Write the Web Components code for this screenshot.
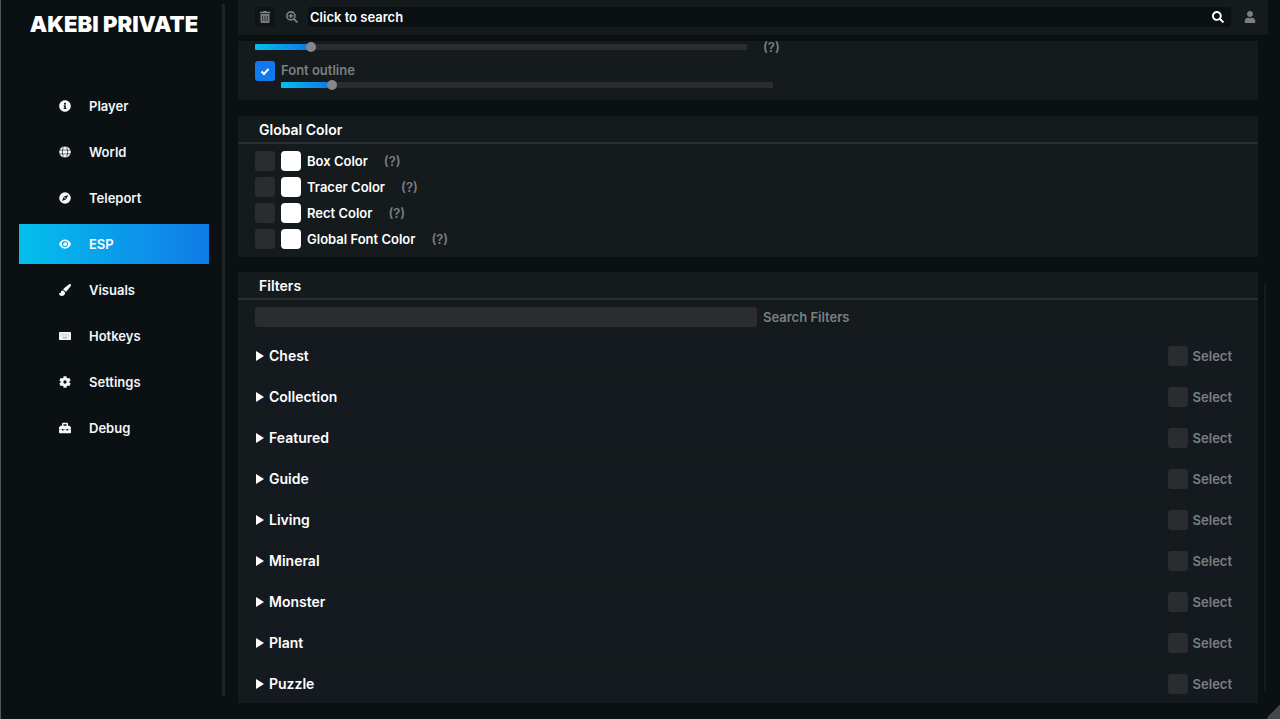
<!DOCTYPE html>
<html lang="en">
<head>
<meta charset="utf-8">
<title>Akebi Private</title>
<style>
  html { background: #0b1013; }
  body {
    margin: 0;
    font-family: Inter, "Liberation Sans", sans-serif;
    font-size: 13px;
    font-weight: 600;
    line-height: 20px;
    color: #fff;
    --panel: #151a1d;
    --field: #2a2c2f;
    --muted: #7c7f81;
    --rule: #2a2d34;
    --accent: linear-gradient(90deg, #04c0ec, #107ae8);
  }
</style>
</head>
<body>
<akebi-app></akebi-app>

<script>
const define = (name, html, setup) => {
  const template = document.createElement('template');
  template.innerHTML = html;
  customElements.define(name, class extends HTMLElement {
    constructor() {
      super();
      this.attachShadow({ mode: 'open' }).append(template.content.cloneNode(true));
    }
    connectedCallback() {
      if (setup) setup(this, this.shadowRoot);
    }
  });
};

const ICONS = {
  info: ['0 0 512 512', '<path d="M256 8C119.043 8 8 119.083 8 256c0 136.997 111.043 248 248 248s248-111.003 248-248C504 119.083 392.957 8 256 8zm0 110c23.196 0 42 18.804 42 42s-18.804 42-42 42-42-18.804-42-42 18.804-42 42-42zm56 254c0 6.627-5.373 12-12 12h-88c-6.627 0-12-5.373-12-12v-24c0-6.627 5.373-12 12-12h12v-64h-12c-6.627 0-12-5.373-12-12v-24c0-6.627 5.373-12 12-12h64c6.627 0 12 5.373 12 12v100h12c6.627 0 12 5.373 12 12v24z"/>'],
  globe: ['0 0 512 512', '<circle cx="256" cy="256" r="248"/><g fill="none" stroke="#0b1013" stroke-width="26"><path d="M8 176h496M8 336h496"/><ellipse cx="256" cy="256" rx="112" ry="262"/></g>'],
  compass: ['0 0 512 512', '<path fill-rule="evenodd" d="M256 8a248 248 0 1 0 0 496 248 248 0 0 0 0-496zm122 143-62 136a58 58 0 0 1-29 29l-136 62c-16 7-24-1-17-17l62-136a58 58 0 0 1 29-29l136-62c16-7 24 1 17 17zM256 222a34 34 0 1 0 0 68 34 34 0 0 0 0-68z"/>'],
  eye: ['0 0 576 512', '<path fill-rule="evenodd" d="M573 241C518 116 411 34 288 34S58 116 3 241a32 32 0 0 0 0 30c55 125 162 207 285 207s230-82 285-207a32 32 0 0 0 0-30zM288 404a148 148 0 1 1 148-148 148 148 0 0 1-148 148zm0-244a95 95 0 0 0-25 4 48 48 0 0 1-67 67A96 96 0 1 0 288 160z"/>'],
  brush: ['0 0 512 512', '<path d="M460 4c-14 0-28 7-40 17L212 180c-18 16-28 36-28 58l90 86c26 2 46-8 62-28L504 84c6-12 8-24 8-37 0-26-18-43-52-43zM170 262c-50 0-80 34-90 82-8 40-18 54-50 50-16-2-32 4-30 18 8 60 70 96 122 96 84 0 142-56 140-142z"/>'],
  keyboard: ['0 0 576 512', '<rect y="64" width="576" height="384" rx="36"/><path fill="none" stroke="#0b1013" stroke-opacity=".3" stroke-width="40" stroke-dasharray="44 28" d="M70 166h440M70 256h440"/><path stroke="#0b1013" stroke-opacity=".5" stroke-width="36" d="M180 346h216"/>'],
  gear: ['0 0 512 512', '<circle cx="256" cy="256" r="130" fill="none" stroke="currentColor" stroke-width="120"/><g fill="none" stroke="currentColor" stroke-width="130"><path d="M256 10v110M256 392v110M44 134l96 55M372 323l96 55M44 378l96-55M372 189l96-55"/></g>'],
  toolbox: ['0 0 512 512', '<path fill-rule="evenodd" d="M502 214l-45-45c-6-6-14-9-22-9h-51V80c0-26-22-48-48-48H176c-26 0-48 22-48 48v80H77c-8 0-16 3-22 9l-45 45c-6 6-10 14-10 22v94h128v-32h64v32h128v-32h64v32h128v-94c0-8-4-16-10-22zM320 160H192V96h128zM384 360h-64v-16H192v16h-64v-16H0v104c0 18 14 32 32 32h448c18 0 32-14 32-32V344H384z"/>'],
  trash: ['0 0 448 512', '<path d="M32 464a48 48 0 0 0 48 48h288a48 48 0 0 0 48-48V128H32zm272-256a16 16 0 0 1 32 0v224a16 16 0 0 1-32 0zm-96 0a16 16 0 0 1 32 0v224a16 16 0 0 1-32 0zm-96 0a16 16 0 0 1 32 0v224a16 16 0 0 1-32 0zM432 32H312l-9.4-18.7A24 24 0 0 0 281.1 0H166.8a23.72 23.72 0 0 0-21.4 13.3L136 32H16A16 16 0 0 0 0 48v32a16 16 0 0 0 16 16h416a16 16 0 0 0 16-16V48a16 16 0 0 0-16-16z"/>'],
  search: ['0 0 512 512', '<path d="M505 442.7L405.3 343c-4.5-4.5-10.6-7-17-7H372c27.6-35.3 44-79.7 44-128C416 93.1 322.9 0 208 0S0 93.1 0 208s93.1 208 208 208c48.3 0 92.7-16.4 128-44v16.3c0 6.4 2.5 12.5 7 17l99.7 99.7c9.4 9.4 24.6 9.4 33.9 0l28.3-28.3c9.4-9.4 9.4-24.6.1-34zM208 336c-70.7 0-128-57.2-128-128 0-70.7 57.2-128 128-128 70.7 0 128 57.2 128 128 0 70.7-57.2 128-128 128z"/>'],
  zoomin: ['0 0 512 512', '<g fill="none" stroke="currentColor"><circle cx="208" cy="208" r="172" stroke-width="72"/><path stroke-width="84" stroke-linecap="round" d="M345 345l118 118"/><path stroke-width="72" d="M208 112v192M112 208h192"/></g>'],
  user: ['0 0 448 512', '<path d="M224 256c70.7 0 128-57.3 128-128S294.7 0 224 0 96 57.3 96 128s57.3 128 128 128zm89.6 32h-16.7c-22.2 10.2-46.9 16-72.9 16s-50.6-5.8-72.9-16h-16.7C60.2 288 0 348.2 0 422.4V464c0 26.5 21.5 48 48 48h352c26.5 0 48-21.5 48-48v-41.6c0-74.2-60.2-134.4-134.4-134.4z"/>'],
  triangle: ['0 0 8 10', '<path d="M0 0l8 5-8 5z"/>']
};

define('app-icon', `
  <style>
    :host { display: block; width: 12px; height: 12px; flex: none; }
    svg { display: block; width: 100%; height: 100%; fill: currentColor; }
  </style>
  <svg aria-hidden="true"></svg>`, (host, root) => {
  const [box, shapes] = ICONS[host.getAttribute('name')];
  const svg = root.querySelector('svg');
  svg.setAttribute('viewBox', box);
  svg.innerHTML = shapes;
});

define('nav-item', `
  <style>
    :host { display: block; }
    a {
      display: flex; align-items: center; gap: 18px;
      height: 40px; padding-left: 40px;
      color: #f4f6f7; text-decoration: none;
    }
    :host([current]) a { background: var(--accent); color: #fff; }
  </style>
  <a href="#"><span><slot></slot></span></a>`, (host, root) => {
  const link = root.querySelector('a');
  const icon = document.createElement('app-icon');
  icon.setAttribute('name', host.getAttribute('icon'));
  link.prepend(icon);
  if (host.hasAttribute('current')) link.setAttribute('aria-current', 'page');
});

define('side-nav', `
  <style>
    :host {
      display: flex; box-sizing: border-box;
      border-left: 1px solid #54585b;
      padding: 4px 13px 23px 0;
    }
    .inner { flex: 1; padding: 4px 13px 0 18px; border-right: 3px solid #212426; }
    h1 {
      margin: 0 0 46px; height: 32px; line-height: 32px;
      font-size: 22px; font-weight: 900; text-align: center; white-space: nowrap;
    }
    nav { display: grid; gap: 6px; }
  </style>
  <div class="inner">
    <h1>AKEBI PRIVATE</h1>
    <nav aria-label="Sections">
      <nav-item icon="info">Player</nav-item>
      <nav-item icon="globe">World</nav-item>
      <nav-item icon="compass">Teleport</nav-item>
      <nav-item icon="eye" current>ESP</nav-item>
      <nav-item icon="brush">Visuals</nav-item>
      <nav-item icon="keyboard">Hotkeys</nav-item>
      <nav-item icon="gear">Settings</nav-item>
      <nav-item icon="toolbox">Debug</nav-item>
    </nav>
  </div>`);

define('top-bar', `
  <style>
    :host {
      display: flex; align-items: center; box-sizing: border-box;
      height: 35px; padding: 0 8px 1px 17px; background: var(--panel);
    }
    button {
      display: grid; place-items: center; width: 20px; height: 20px; flex: none;
      padding: 0; border: 0; border-radius: 3px; background: none; color: var(--muted);
    }
    .clear { background: #0f1416; margin-right: 7px; }
    form {
      flex: 1; display: flex; margin: 0 9px 0 6px; padding-right: 3px;
      background: #0b1013; border-radius: 3px;
    }
    input {
      flex: 1; min-width: 0; height: 20px; padding: 0 0 0 2px; border: 0;
      background: none; font: inherit; color: #fff; outline: none;
    }
    input::placeholder { color: #fff; opacity: 1; }
    form button { color: #fff; }
  </style>
  <button class="clear" aria-label="Clear"><app-icon name="trash"></app-icon></button>
  <button aria-label="Zoom"><app-icon name="zoomin"></app-icon></button>
  <form role="search">
    <input type="text" aria-label="Search" placeholder="Click to search">
    <button type="button" aria-label="Search"><app-icon name="search"></app-icon></button>
  </form>
  <button aria-label="Account"><app-icon name="user"></app-icon></button>`);

define('range-slider', `
  <style>
    :host { display: block; width: 492px; max-width: 100%; height: 10px; }
    input { appearance: none; display: block; width: 100%; height: 10px; margin: 0; background: none; }
    input::-webkit-slider-runnable-track {
      height: 6px; border-radius: 1px;
      background: var(--accent) 0 0 / var(--fill) 100% no-repeat, var(--field);
    }
    input::-webkit-slider-thumb {
      appearance: none; width: 10px; height: 10px; margin-top: -2px;
      border-radius: 50%; background: #85878a;
    }
  </style>
  <input type="range" min="0" max="1000">`, (host, root) => {
  const input = root.querySelector('input');
  const paint = () => host.style.setProperty('--fill', input.value / 10 + '%');
  input.value = host.getAttribute('value');
  input.setAttribute('aria-label', host.getAttribute('label'));
  input.addEventListener('input', paint);
  paint();
});

const CHECKBOX = `
  input[type=checkbox] {
    appearance: none; width: 20px; height: 20px; flex: none; margin: 0;
    border-radius: 3px; background: var(--field);
  }
  input[type=checkbox]:checked {
    background: #107aec url("data:image/svg+xml,%3Csvg xmlns='http://www.w3.org/2000/svg' viewBox='0 0 20 20'%3E%3Cpath d='M6.5 10.5l2.5 2.5 4.5-5' fill='none' stroke='white' stroke-width='2'/%3E%3C/svg%3E");
  }`;

define('font-settings', `
  <style>
    ${CHECKBOX}
    :host { display: block; padding: 1px 17px 10px; background: var(--panel); color: var(--muted); }
    .size { display: flex; align-items: center; gap: 16px; height: 10px; }
    .outline { display: flex; gap: 6px; margin-top: 8px; }
    .outline input { margin-top: 1px; }
    .outline div { flex: 1; }
    label { display: block; }
  </style>
  <div class="size"><range-slider value="106" label="Font size"></range-slider><span>(?)</span></div>
  <div class="outline">
    <input type="checkbox" id="outline" checked>
    <div>
      <label for="outline">Font outline</label>
      <range-slider value="95" label="Outline thickness"></range-slider>
    </div>
  </div>`);

define('settings-panel', `
  <style>
    :host { display: block; background: var(--panel); }
    h2 {
      margin: 0; padding: 3px 21px; height: 20px; line-height: 22px;
      border-bottom: 2px solid var(--rule);
      font-size: 14px; font-weight: 600;
    }
    .body { padding: 7px 17px 8px; }
    :host([compact]) .body { padding-bottom: 4px; }
  </style>
  <h2><slot name="title"></slot></h2>
  <div class="body"><slot></slot></div>`);

define('color-row', `
  <style>
    ${CHECKBOX}
    :host { display: flex; align-items: center; gap: 6px; height: 20px; margin-bottom: 6px; }
    :host(:last-of-type) { margin-bottom: 0; }
    input[type=color] {
      appearance: none; width: 20px; height: 20px; flex: none; margin: 0; padding: 0;
      border: 0; border-radius: 4px; overflow: hidden; background: #fff;
    }
    input::-webkit-color-swatch-wrapper { padding: 0; }
    input::-webkit-color-swatch { border: 0; }
    .help { margin-left: 10px; color: var(--muted); }
  </style>
  <input type="checkbox" aria-label="Enable">
  <input type="color" id="color" value="#ffffff">
  <label for="color"><slot></slot></label>
  <span class="help">(?)</span>`);

define('filter-search', `
  <style>
    :host { display: flex; align-items: center; gap: 6px; margin-bottom: 14px; color: var(--muted); }
    input {
      box-sizing: border-box; width: 502px; height: 20px; padding: 0 6px;
      border: 0; border-radius: 3px; background: var(--field); font: inherit; color: #fff;
    }
  </style>
  <input type="text" id="filter"><label for="filter">Search Filters</label>`);

define('filter-row', `
  <style>
    ${CHECKBOX}
    :host {
      display: flex; align-items: center; justify-content: space-between;
      height: 30px; margin-bottom: 11px; padding-right: 9px; background: #141a20;
    }
    :host(:last-of-type) { margin-bottom: 0; }
    button {
      display: flex; align-items: center; gap: 5px; padding: 0 0 0 1px;
      border: 0; background: none; color: inherit; font: inherit; font-size: 14px;
    }
    button app-icon { width: 8px; height: 10px; }
    label { display: flex; align-items: center; gap: 5px; color: var(--muted); }
  </style>
  <button aria-expanded="false"><app-icon name="triangle"></app-icon><span><slot></slot></span></button>
  <label><input type="checkbox">Select</label>`);

define('akebi-app', `
  <style>
    :host {
      display: grid; grid-template-columns: 238px minmax(0, 1fr);
      min-height: 100vh; position: relative;
    }
    main { padding: 0 12px 16px 0; }
    .panels { display: grid; gap: 16px; margin-top: 6px; padding-right: 10px; position: relative; }
    settings-panel + settings-panel { margin-top: -1px; }
    .scroll {
      position: absolute; right: 2px; top: 243px; bottom: 12px; width: 2px;
      background: #171c1f;
    }
    .grip {
      position: absolute; right: 0; bottom: 0; width: 14px; height: 14px;
      background: linear-gradient(135deg, transparent 50%, #43464b 50%);
    }
  </style>
  <side-nav></side-nav>
  <main>
    <top-bar></top-bar>
    <div class="panels">
      <font-settings></font-settings>
      <settings-panel>
        <span slot="title">Global Color</span>
        <color-row>Box Color</color-row>
        <color-row>Tracer Color</color-row>
        <color-row>Rect Color</color-row>
        <color-row>Global Font Color</color-row>
      </settings-panel>
      <settings-panel compact>
        <span slot="title">Filters</span>
        <filter-search></filter-search>
        <filter-row>Chest</filter-row>
        <filter-row>Collection</filter-row>
        <filter-row>Featured</filter-row>
        <filter-row>Guide</filter-row>
        <filter-row>Living</filter-row>
        <filter-row>Mineral</filter-row>
        <filter-row>Monster</filter-row>
        <filter-row>Plant</filter-row>
        <filter-row>Puzzle</filter-row>
      </settings-panel>
      <div class="scroll"></div>
    </div>
  </main>
  <div class="grip"></div>`);
</script>
</body>
</html>
